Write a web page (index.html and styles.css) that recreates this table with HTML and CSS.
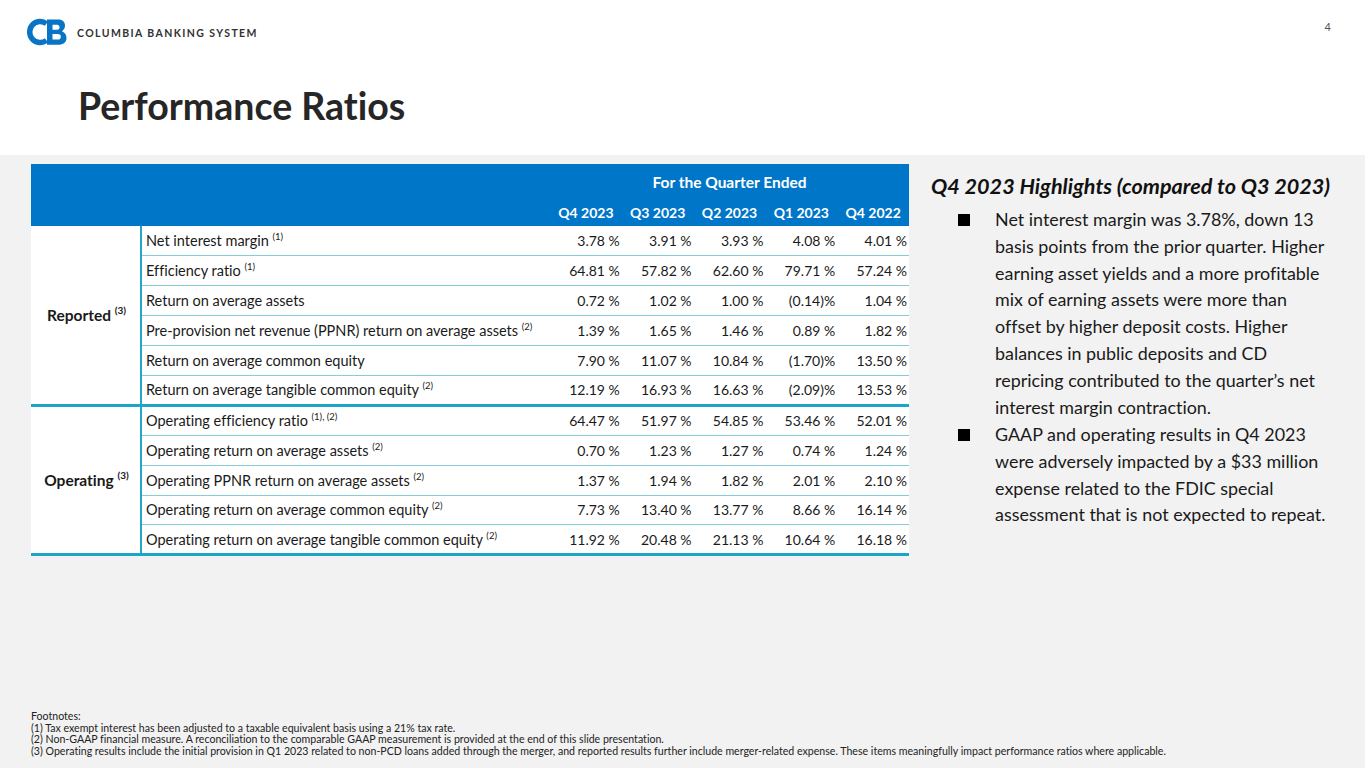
FILE: index.html
```html
<!DOCTYPE html>
<html>
<head>
<meta charset="utf-8">
<link rel="stylesheet" href="styles.css">
</head>
<body>
<header class="top">
  <div class="brand">
    <svg class="logo" viewBox="0 0 42 28" width="42" height="28">
      <path d="M21.5,5.6 A10.5,10.5 0 1 0 21.5,22.4" fill="none" stroke="#0a74c4" stroke-width="5.5"/>
      <path fill="#0a74c4" fill-rule="evenodd" d="M22,1.5 H33 C38,1.5 40,4.2 40,7.6 C40,10 39,12 37,13.2 C40,14.5 41.5,17 41.5,20 C41.5,24 38.5,26.8 33,26.8 H22 Z M27.5,6.8 H32 A2.5,2.5 0 0 1 32,11.8 H27.5 Z M27.5,16 H33 A2.8,2.8 0 0 1 33,21.6 H27.5 Z"/>
    </svg>
    <span class="brand-name">COLUMBIA BANKING SYSTEM</span>
  </div>
  <div class="page-num">4</div>
  <h1 class="title">Performance Ratios</h1>
</header>
<main class="content">
  <table class="ratios">
    <colgroup>
      <col class="c-group"><col class="c-label">
      <col class="c-num"><col class="c-num"><col class="c-num"><col class="c-num"><col class="c-num">
    </colgroup>
    <thead>
      <tr class="h1"><th></th><th></th><th colspan="5">For the Quarter Ended</th></tr>
      <tr class="h2"><th></th><th></th><th>Q4 2023</th><th>Q3 2023</th><th>Q2 2023</th><th>Q1 2023</th><th>Q4 2022</th></tr>
    </thead>
    <tbody class="grp">
      <tr><td class="group" rowspan="6">Reported <sup>(3)</sup></td><td class="label">Net interest margin <sup>(1)</sup></td><td>3.78 %</td><td>3.91 %</td><td>3.93 %</td><td>4.08 %</td><td>4.01 %</td></tr>
      <tr><td class="label">Efficiency ratio <sup>(1)</sup></td><td>64.81 %</td><td>57.82 %</td><td>62.60 %</td><td>79.71 %</td><td>57.24 %</td></tr>
      <tr><td class="label">Return on average assets</td><td>0.72 %</td><td>1.02 %</td><td>1.00 %</td><td>(0.14)%</td><td>1.04 %</td></tr>
      <tr><td class="label">Pre-provision net revenue (PPNR) return on average assets <sup>(2)</sup></td><td>1.39 %</td><td>1.65 %</td><td>1.46 %</td><td>0.89 %</td><td>1.82 %</td></tr>
      <tr><td class="label">Return on average common equity</td><td>7.90 %</td><td>11.07 %</td><td>10.84 %</td><td>(1.70)%</td><td>13.50 %</td></tr>
      <tr><td class="label">Return on average tangible common equity <sup>(2)</sup></td><td>12.19 %</td><td>16.93 %</td><td>16.63 %</td><td>(2.09)%</td><td>13.53 %</td></tr>
    </tbody>
    <tbody class="grp">
      <tr><td class="group" rowspan="5">Operating <sup>(3)</sup></td><td class="label">Operating efficiency ratio <sup>(1), (2)</sup></td><td>64.47 %</td><td>51.97 %</td><td>54.85 %</td><td>53.46 %</td><td>52.01 %</td></tr>
      <tr><td class="label">Operating return on average assets <sup>(2)</sup></td><td>0.70 %</td><td>1.23 %</td><td>1.27 %</td><td>0.74 %</td><td>1.24 %</td></tr>
      <tr><td class="label">Operating PPNR return on average assets <sup>(2)</sup></td><td>1.37 %</td><td>1.94 %</td><td>1.82 %</td><td>2.01 %</td><td>2.10 %</td></tr>
      <tr><td class="label">Operating return on average common equity <sup>(2)</sup></td><td>7.73 %</td><td>13.40 %</td><td>13.77 %</td><td>8.66 %</td><td>16.14 %</td></tr>
      <tr><td class="label">Operating return on average tangible common equity <sup>(2)</sup></td><td>11.92 %</td><td>20.48 %</td><td>21.13 %</td><td>10.64 %</td><td>16.18 %</td></tr>
    </tbody>
  </table>
  <section class="highlights">
    <h2>Q4 2023 Highlights (compared to Q3 2023)</h2>
    <ul>
      <li>Net interest margin was 3.78%, down 13<br>basis points from the prior quarter. Higher<br>earning asset yields and a more profitable<br>mix of earning assets were more than<br>offset by higher deposit costs. Higher<br>balances in public deposits and CD<br>repricing contributed to the quarter’s net<br>interest margin contraction.</li>
      <li>GAAP and operating results in Q4 2023<br>were adversely impacted by a $33 million<br>expense related to the FDIC special<br>assessment that is not expected to repeat.</li>
    </ul>
  </section>
</main>
<footer class="notes">
  <p>Footnotes:</p>
  <p>(1) Tax exempt interest has been adjusted to a taxable equivalent basis using a 21% tax rate.</p>
  <p>(2) Non-GAAP financial measure. A reconciliation to the comparable GAAP measurement is provided at the end of this slide presentation.</p>
  <p>(3) Operating results include the initial provision in Q1 2023 related to non-PCD loans added through the merger, and reported results further include merger-related expense. These items meaningfully impact performance ratios where applicable.</p>
</footer>
</body>
</html>
```

FILE: styles.css
```css
* { box-sizing: border-box; }
html, body { margin: 0; padding: 0; }
body {
  width: 1365px;
  height: 768px;
  overflow: hidden;
  background: #f2f2f2;
  font-family: Lato, "Open Sans", sans-serif;
  font-variant-ligatures: none;
  color: #1a1a1a;
  position: relative;
}
.top {
  background: #ffffff;
  height: 155px;
  position: relative;
  padding: 18px 0 0 25px;
}
.brand { display: flex; align-items: center; gap: 10px; }
.logo { display: block; }
.brand-name {
  font-size: 10.5px;
  font-weight: 700;
  letter-spacing: 1.4px;
  color: #333333;
  margin-top: 1px;
}
.page-num {
  position: absolute;
  top: 20px;
  right: 34px;
  font-size: 11px;
  color: #555555;
}
.title {
  margin: 41px 0 0 53px;
  font-size: 37.5px;
  font-weight: 700;
  color: #262626;
  line-height: 1;
}
.content {
  display: flex;
  align-items: flex-start;
  padding: 9px 0 0 31px;
  gap: 22px;
}
.ratios {
  width: 878px;
  border-collapse: collapse;
  background: #ffffff;
  font-size: 14px;
  table-layout: fixed;
}
.c-group { width: 110px; }
.c-label { width: 409px; }
.c-num { width: 71.8px; }
.ratios thead tr { background: #0076c9; color: #ffffff; }
.ratios th { font-weight: 700; text-align: center; padding: 0; }
.ratios .h1 th { height: 32px; padding-top: 4px; font-size: 15.5px; }
.ratios .h2 th { height: 30px; padding-top: 2px; }
.ratios td {
  height: 29.9px;
  padding: 0 2px 0 0;
  text-align: right;
  border-top: 1px solid #86cdda;
  white-space: nowrap;
}
.ratios tbody tr:first-child td { border-top: none; }
.ratios td.label {
  text-align: left;
  padding-left: 4px;
  border-left: 2px solid #20a8c6;
  font-size: 14.5px;
}
.ratios td.group {
  text-align: center;
  font-weight: 700;
  font-size: 15.5px;
  border-top: none;
  padding: 0 0 0 2px;
}
.ratios tbody.grp + tbody.grp { border-top: 3px solid #1ba5c6; }
.ratios tbody.grp:last-child { border-bottom: 3px solid #1ba5c6; }
.ratios sup { font-size: 9.5px; line-height: 0; vertical-align: 6px; }
.ratios td.group sup { font-size: 10px; vertical-align: 7px; }
.highlights { width: 420px; padding-top: 9px; }
.highlights h2 {
  margin: 0;
  font-size: 21.6px;
  font-weight: 700;
  font-style: italic;
  color: #111111;
  line-height: 26px;
}
.highlights ul { list-style: none; margin: 7px 0 0 0; padding: 0 0 0 64px; }
.highlights li {
  position: relative;
  font-size: 17.9px;
  line-height: 26.8px;
  color: #1a1a1a;
  margin-bottom: 0.6px;
  white-space: nowrap;
}
.highlights li::before {
  content: "";
  position: absolute;
  left: -37px;
  top: 8px;
  width: 12px;
  height: 12px;
  background: #000000;
}
.notes {
  position: absolute;
  left: 31px;
  top: 711px;
  font-size: 10.6px;
  line-height: 11.6px;
  color: #222222;
}
.notes p { margin: 0; }
```
